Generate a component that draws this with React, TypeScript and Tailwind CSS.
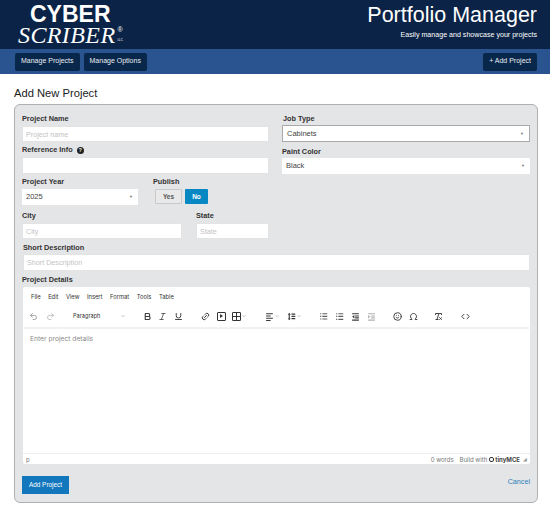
import React from 'react';
import {
  Undo2, Redo2, Bold, Italic, Underline, Link2, ChevronDown, Smile, Omega, RemoveFormatting, Code,
} from 'lucide-react';

const label = "block text-[7.3px] leading-[10px] font-bold text-[#333]";
const input = "block w-full h-4 bg-white border border-[#e3e3e3] px-[3px] text-[7.2px] text-[#333] placeholder:text-[#c4c4c4] outline-none";

function Select({ value, className }: { value: string; className?: string }) {
  return (
    <div className={"flex items-center justify-between bg-white pl-[4px] pr-1 h-4 text-[7.5px] text-[#444] " + (className || "")}>
      <span>{value}</span>
      <span className="text-[4px] text-[#777] pr-[1px]">▼</span>
    </div>
  );
}

function NavBtn({ children }: { children: React.ReactNode }) {
  return (
    <button className="h-[18px] px-[6px] bg-[#08274a] rounded-[2px] text-[7px] text-[#e8edf3]">{children}</button>
  );
}

const ic = "w-[9px] h-[9px] text-[#3a3a3a] shrink-0";
const chev = "w-[6px] h-[6px] opacity-50 shrink-0";

// toolbar glyphs tinyMCE draws with filled bars
function Bars({ className, d }: { className: string; d: string }) {
  return (
    <svg viewBox="0 0 24 24" className={className} fill="currentColor"><path d={d} /></svg>
  );
}

const alignD = "M3 3h18v3H3zM3 9h12v3H3zM3 15h18v3H3zM3 21h12v3H3z";
const lineHeightD = "M6 2l4 5H7.5v10H10l-4 5-4-5h2.500V7H2zM12 4h10v3H12zM12 10h10v3H12zM12 16h10v3H12z";
const olD = "M3 3h3v3H3zM9 3h13v3H9zM3 10h3v3H3zM9 10h13v3H9zM3 17h3v3H3zM9 17h13v3H9z";
const ulD = "M3 3h3v3H3zM9 3h13v3H9zM3 10h3v3H3zM9 10h13v3H9zM3 18h3v3H3zM9 18h13v3H9z";
const outdentD = "M3 3h18v3H3zM11 9h10v3H11zM11 14h10v3H11zM3 20h18v3H3zM9 8v9l-6-4.500z";
const indentD = "M3 3h18v3H3zM11 9h10v3H11zM11 14h10v3H11zM3 20h18v3H3zM3 8v9l6-4.500z";

export default function App() {
  return (
    <div className="w-[550px] h-[510px] bg-white overflow-hidden" style={{ fontFamily: '"Liberation Sans", Arial, sans-serif' }}>
      {/* Header */}
      <div className="h-[49px] bg-[#0b2346] flex justify-between text-white">
        <div className="pl-[18px] pt-[1px] w-[140px]">
          <div className="pl-[12px] text-[23px] leading-[26px] font-bold">CYBER</div>
          <div className="flex items-start -mt-[3px]">
            <span className="text-[24px] leading-[22px] italic tracking-[0.4px]" style={{ fontFamily: '"Liberation Serif", serif' }}>SCRIBER</span>
            <div className="flex flex-col ml-[2px] mt-[2px]">
              <span className="text-[7px] leading-[8px]">®</span>
              <span className="text-[3px] leading-[3px] mt-[5px]">LLC</span>
            </div>
          </div>
        </div>
        <div className="pr-[13px] text-right">
          <div className="text-[21.5px] leading-[25px] pt-[3px]">Portfolio Manager</div>
          <div className="text-[7.1px] leading-[9px] mt-[3px]">Easily manage and showcase your projects</div>
        </div>
      </div>
      {/* Nav */}
      <div className="h-[25px] bg-[#2a5490] flex items-center justify-between pl-[15px] pr-[13px]">
        <div className="flex gap-1">
          <NavBtn>Manage Projects</NavBtn>
          <NavBtn>Manage Options</NavBtn>
        </div>
        <NavBtn>+ Add Project</NavBtn>
      </div>
      <div className="px-[14px] pr-3">
        <h1 className="text-[11.2px] leading-[16px] mt-[11px] text-[#222]">Add New Project</h1>
        {/* Panel */}
        <div className="mt-[3px] h-[399px] bg-[#e4e5e7] border border-[#b0b0b0] rounded-[6px] pl-[7px] pr-[7px] pt-[9px]">
          <div className="grid grid-cols-[247px_248px] gap-x-[13px]">
            <div>
              <label className={label}>Project Name</label>
              <input className={input + " mt-[2px]"} placeholder="Project name" readOnly />
              <div className="flex items-center gap-1 mt-[3px]">
                <label className={label}>Reference Info</label>
                <span className="w-[7px] h-[7px] rounded-full bg-[#222] text-white text-[5px] leading-[7px] text-center font-bold">?</span>
              </div>
              <input className={input + " mt-[2px] h-[17px]"} readOnly />
              <div className="flex mt-[3px]">
                <div className="w-[116px]">
                  <label className={label}>Project Year</label>
                  <Select value="2025" className="mt-[2px]" />
                </div>
                <div className="ml-[15px]">
                  <label className={label}>Publish</label>
                  <div className="flex gap-[3px] mt-[2px] ml-[2px]">
                    <button className="w-[27px] h-[15px] bg-[#e9e9e9] border border-[#c9c9c9] rounded-[1px] text-[6.5px] font-bold text-[#555]">Yes</button>
                    <button className="w-[23px] h-[15px] bg-[#0788c3] rounded-[1px] text-[6.5px] font-bold text-white">No</button>
                  </div>
                </div>
              </div>
              <div className="flex gap-[14px] mt-[6px]">
                <div className="w-[160px]">
                  <label className={label}>City</label>
                  <input className={input + " mt-[2px]"} placeholder="City" readOnly />
                </div>
                <div className="w-[73px]">
                  <label className={label}>State</label>
                  <input className={input + " mt-[2px]"} placeholder="State" readOnly />
                </div>
              </div>
            </div>
            <div>
              <label className={label + " ml-[1px]"}>Job Type</label>
              <Select value="Cabinets" className="mt-[1px] h-[17px] border border-[#aaa]" />
              <label className={label + " mt-[5px]"}>Paint Color</label>
              <Select value="Black" className="mt-[1px]" />
            </div>
          </div>
          <label className={label + " mt-[4px] ml-[1px]"}>Short Description</label>
          <input className={input + " mt-[1px] ml-[1px] !w-[507px] h-[17px]"} placeholder="Short Description" readOnly />
          <label className={label + " mt-[4px]"}>Project Details</label>
          {/* Editor */}
          <div className="mt-[2px] ml-[1px] w-[507px] h-[177px] bg-white rounded-[2px] flex flex-col text-[#333]">
            <div className="flex gap-[7.5px] pl-2 pt-[6px] text-[5.8px] leading-[8px] text-[#333]" style={{ fontFamily: 'Inter, sans-serif' }}>
              <span>File</span><span>Edit</span><span>View</span><span>Insert</span><span>Format</span><span>Tools</span><span>Table</span>
            </div>
            <div className="flex items-center h-[12px] mt-[9px] pl-[6px]">
              <Undo2 className={ic + " opacity-60"} />
              <Redo2 className={ic + " opacity-40 ml-[8px]"} />
              <span className="ml-[18px] w-[53px] flex justify-between items-center text-[5.6px] leading-[9px]" style={{ fontFamily: 'Inter, sans-serif' }}>Paragraph<ChevronDown className={chev} /></span>
              <Bold className={ic + " ml-[17px]"} strokeWidth={3} />
              <Italic className={ic + " ml-[6px]"} />
              <Underline className={ic + " ml-[7px]"} strokeWidth={2.5} />
              <Link2 className={ic + " ml-[18px] -rotate-45"} strokeWidth={2.5} />
              <span className={ic + " ml-[7px] border border-[#333] rounded-[1px] flex items-center justify-center"}>
                <span className="w-0 h-0 border-y-[2px] border-y-transparent border-l-[3px] border-l-[#333]" />
              </span>
              <span className={ic + " ml-[6px] border border-[#333] rounded-[1px] grid grid-cols-2 grid-rows-2 gap-[1px] bg-[#333]"}>
                <span className="bg-white" /><span className="bg-white" /><span className="bg-white" /><span className="bg-white" />
              </span>
              <ChevronDown className={chev} />
              <Bars className={ic + " ml-[18px]"} d={alignD} />
              <ChevronDown className={chev} />
              <Bars className={ic + " ml-[7px]"} d={lineHeightD} />
              <ChevronDown className={chev} />
              <Bars className={ic + " ml-[17px] opacity-80"} d={olD} />
              <Bars className={ic + " ml-[7px] opacity-80"} d={ulD} />
              <Bars className={ic + " ml-[7px]"} d={outdentD} />
              <Bars className={ic + " ml-[7px] opacity-40"} d={indentD} />
              <Smile className={ic + " ml-[17px]"} strokeWidth={2.5} />
              <Omega className={ic + " ml-[7px]"} strokeWidth={2.5} />
              <RemoveFormatting className={ic + " ml-[16px]"} strokeWidth={2.5} />
              <Code className={ic + " ml-[18px]"} strokeWidth={2.5} />
            </div>
            <div className="h-[2px] bg-[#f2f2f2] mt-[5px] mx-[1px]" />
            <div className="flex-1 pl-[7px] pt-[5px] text-[6.7px] leading-[10px] text-[#8a8a8a]" style={{ fontFamily: 'Inter, sans-serif' }}>Enter project details</div>
            <div className="h-[11px] border-t border-[#eee] flex items-center justify-between pl-[3px] pr-[3px] text-[6px] text-[#777]" style={{ fontFamily: 'Inter, sans-serif' }}>
              <span>p</span>
              <div className="flex items-center">
                <span>0 words</span>
                <span className="ml-[6px]">Build with</span>
                <span className="ml-[2px] w-[5px] h-[5px] border border-[#333] rounded-[2px]" />
                <span className="ml-[1px] font-bold text-[#444]">tinyMCE</span>
                <span className="ml-[3px] text-[5px] text-[#999] leading-[5px]">◢</span>
              </div>
            </div>
          </div>
          <div className="flex justify-between items-center mt-[12px]">
            <button className="w-[47px] h-[18px] bg-[#1277bd] text-white text-[6.4px]">Add Project</button>
            <a className="text-[7.2px] text-[#2c7fb8] -mt-[6px]">Cancel</a>
          </div>
        </div>
      </div>
    </div>
  );
}
